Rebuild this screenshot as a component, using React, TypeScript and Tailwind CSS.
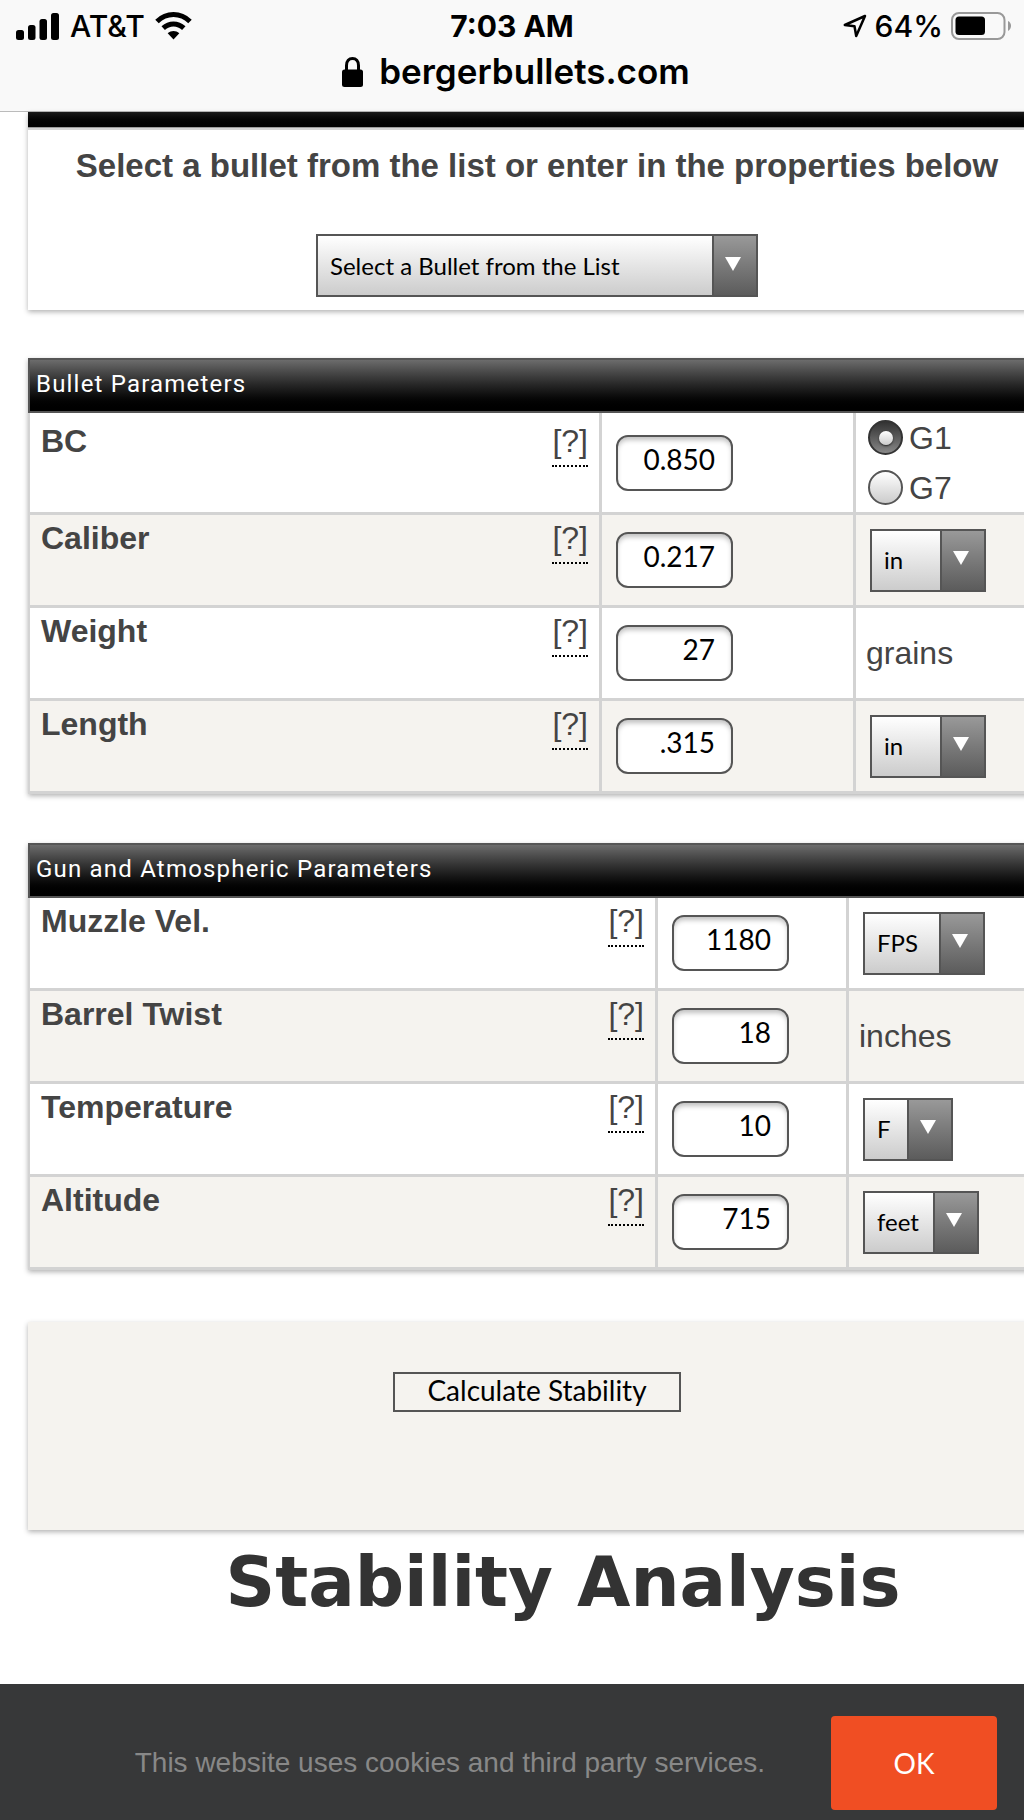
import React, { useState } from 'react';

type Row = {
  id: string;
  label: string;
  value: string;
  unit: React.ReactNode;
};

const SignalIcon = () => (
  <svg width="44" height="27" viewBox="0 0 44 27" fill="#000" aria-hidden="true">
    <rect x="0" y="17" width="8" height="10" rx="2.5" />
    <rect x="12" y="12" width="7.5" height="15" rx="2.5" />
    <rect x="23.5" y="6" width="7.5" height="21" rx="2.5" />
    <rect x="35" y="0" width="8" height="27" rx="2.5" />
  </svg>
);

const WifiIcon = () => (
  <svg width="37" height="28" viewBox="0 0 37 28" fill="none" stroke="#000" aria-hidden="true">
    <path d="M2 9.5C11.5 .2 25.5 .2 35 9.5" strokeWidth="5" />
    <path d="M8.2 16.2c6-5.6 14.6-5.6 20.6 0" strokeWidth="5" />
    <path d="M12.7 21.3c3.5-3.2 8.100-3.2 11.600 0L18.5 27.5z" fill="#000" stroke="none" />
  </svg>
);

const LockIcon = () => (
  <svg width="21" height="30" viewBox="0 0 21 30" aria-hidden="true">
    <path d="M4.5 14V8.5C4.5 4 7 1.5 10.5 1.5S16.5 4 16.5 8.5V14" fill="none" stroke="#000" strokeWidth="3" />
    <rect x="0" y="12.5" width="21" height="17.5" rx="2.5" />
  </svg>
);

const LocationIcon = () => (
  <svg width="24" height="24" viewBox="0 0 24 24" fill="none" stroke="#000" strokeWidth="2.5" strokeLinejoin="round" aria-hidden="true">
    <path d="M22 2L1.8 11L11.5 12.3L13.2 22z" />
  </svg>
);

const BatteryIcon = () => (
  <svg width="61" height="28" viewBox="0 0 61 28" aria-hidden="true">
    <rect x="1" y="1" width="52.5" height="26" rx="7" fill="none" stroke="#999" strokeWidth="2" />
    <rect x="4.5" y="4.5" width="29.5" height="18.5" rx="3.5" fill="#000" />
    <path d="M57 9c4 1.5 4 8 0 10z" fill="#999" />
  </svg>
);

const StatusBar = () => (
  <header className="border-b border-[#bbb] bg-[#f9f9f9] font-['Inter',sans-serif] text-black">
    <div className="grid grid-cols-[1fr_auto_1fr] items-center px-4 pt-2">
      <div className="flex items-center gap-2.5">
        <SignalIcon />
        <span className="text-[30px] leading-9 font-medium">AT&amp;T</span>
        <WifiIcon />
      </div>
      <span className="text-[30px] leading-9 font-bold">7:03 AM</span>
      <div className="-mr-1 flex items-center justify-end gap-2">
        <LocationIcon />
        <span className="text-[30px] leading-9 font-medium">64%</span>
        <BatteryIcon />
      </div>
    </div>
    <div className="flex items-center justify-center gap-4 pt-1 pb-4 pl-2">
      <LockIcon />
      <span className="text-[35px] leading-[47px] font-semibold">bergerbullets.com</span>
    </div>
  </header>
);

type DropDownProps = {
  id: string;
  label: string;
  options: string[];
  className: string;
};

const DropDown = ({ id, label, options, className }: DropDownProps) => (
  <div className={`relative ${className}`}>
    <select
      id={id}
      aria-label={label}
      className="h-[63px] w-full appearance-none border-2 border-[#555] bg-linear-to-b from-white to-[#ccc] pr-12 pl-3 font-['Lato',sans-serif] text-2xl text-black"
    >
      {options.map((option) => (
        <option key={option}>{option}</option>
      ))}
    </select>
    <span className="pointer-events-none absolute inset-y-0 right-0 flex w-[46px] items-center justify-center border-2 border-[#555] bg-linear-to-b from-[#999] to-[#5c5c5c] pr-1 pb-1">
      <svg width="16" height="14" viewBox="0 0 16 14" fill="#fff" aria-hidden="true">
        <path d="M0 0h16L8 14z" />
      </svg>
    </span>
  </div>
);

const DragRadios = () => {
  const [model, setModel] = useState('G1');

  return (
    <div className="flex flex-col gap-[15px] pl-3">
      {['G1', 'G7'].map((name) => (
        <label key={name} className="flex h-[35px] items-center gap-1.5">
          <input
            type="radio"
            name="drag-model"
            value={name}
            checked={model === name}
            onChange={() => setModel(name)}
            className="peer sr-only"
          />
          <span className="flex size-[35px] items-center justify-center rounded-full border-2 border-[#555] bg-linear-to-b from-white to-[#ccc] peer-checked:border-[#333] peer-checked:from-[#333] peer-checked:to-[#888]">
            {model === name && (
              <span className="size-3.5 rounded-full bg-linear-to-b from-white to-[#ccc] shadow-[0_1px_2px_#222]" />
            )}
          </span>
          {name}
        </label>
      ))}
    </div>
  );
};

const bulletRows: Row[] = [
  { id: 'bc', label: 'BC', value: '0.850', unit: <DragRadios /> },
  {
    id: 'caliber',
    label: 'Caliber',
    value: '0.217',
    unit: <DropDown id="caliber-unit" label="Caliber unit" options={['in', 'mm']} className="ml-3.5 w-[116px]" />,
  },
  { id: 'weight', label: 'Weight', value: '27', unit: 'grains' },
  {
    id: 'length',
    label: 'Length',
    value: '.315',
    unit: <DropDown id="length-unit" label="Length unit" options={['in', 'mm']} className="ml-3.5 w-[116px]" />,
  },
];

const gunRows: Row[] = [
  {
    id: 'velocity',
    label: 'Muzzle Vel.',
    value: '1180',
    unit: <DropDown id="velocity-unit" label="Velocity unit" options={['FPS', 'MPS']} className="ml-3.5 w-[122px]" />,
  },
  { id: 'twist', label: 'Barrel Twist', value: '18', unit: 'inches' },
  {
    id: 'temperature',
    label: 'Temperature',
    value: '10',
    unit: <DropDown id="temperature-unit" label="Temperature unit" options={['F', 'C']} className="ml-3.5 w-[90px]" />,
  },
  {
    id: 'altitude',
    label: 'Altitude',
    value: '715',
    unit: <DropDown id="altitude-unit" label="Altitude unit" options={['feet', 'm']} className="ml-3.5 w-[116px]" />,
  },
];

type ParameterTableProps = {
  title: string;
  rows: Row[];
  valueCol: string;
  unitCol: string;
};

const ParameterTable = ({ title, rows, valueCol, unitCol }: ParameterTableProps) => (
  <table className="w-full table-fixed border-separate border-spacing-0 bg-white text-[32px] leading-9 text-[#444] shadow-[0_2px_5px_rgba(0,0,0,0.3)]">
    <colgroup>
      <col />
      <col className={valueCol} />
      <col className={unitCol} />
    </colgroup>
    <thead>
      <tr>
        <th
          colSpan={3}
          className="h-[55px] border-2 border-[#555] bg-linear-to-b from-[#6c6c6c] to-black px-1.5 pb-1 text-left font-['Roboto',sans-serif] text-2xl font-normal tracking-wider text-white"
        >
          {title}
        </th>
      </tr>
    </thead>
    <tbody>
      {rows.map((row) => (
        <tr key={row.id} className="even:bg-[#f5f3ef]">
          <td className={`border-r-3 border-b-3 border-l-2 border-[#d3d3d3] py-[5px] pr-[11px] pl-[11px] ${row.id === 'bc' ? 'h-[102px]' : 'h-[93px]'}`}>
            <div className="flex h-20 items-start justify-between">
              <label htmlFor={row.id} className="font-bold">{row.label}</label>
              <a href={`#${row.id}`} className="border-b-2 border-dotted border-black pb-1.5 leading-9">[?]</a>
            </div>
          </td>
          <td className="border-r-3 border-b-3 border-[#d3d3d3] pl-3.5">
            <input
              id={row.id}
              type="text"
              defaultValue={row.value}
              className="block h-14 w-[117px] rounded-xl border-2 border-[#555] bg-white pr-4 pb-2 text-right font-['Lato',sans-serif] text-[28px] text-black shadow-[inset_0_4px_5px_-1px_rgba(0,0,0,0.25)]"
            />
          </td>
          <td className="border-b-3 border-[#d3d3d3]">
            {typeof row.unit === 'string' ? <span className="pl-2.5">{row.unit}</span> : row.unit}
          </td>
        </tr>
      ))}
    </tbody>
  </table>
);

const App = () => {
  return (
    <div className="flex min-h-screen flex-col overflow-x-hidden bg-white font-['Liberation_Sans',sans-serif]">
      <StatusBar />

      {/* The page is wider than the phone, so the panels run off the right edge */}
      <main className="-mr-[22px] ml-7 flex flex-col">
        <section className="mb-12 bg-white shadow-[0_2px_5px_rgba(0,0,0,0.3)]">
          <div className="h-4 border-b border-[#999] bg-linear-to-b from-[#1a1a1a] to-black" />
          <div className="flex flex-col items-center border-t-2 border-[#d3d3d3] pt-[18px] pb-[13px]">
            <h2 className="mb-[50px] text-[33px] leading-9 font-bold whitespace-nowrap text-[#444]">
              Select a bullet from the list or enter in the properties below
            </h2>
            <DropDown id="bullet" label="Bullet" options={['Select a Bullet from the List']} className="w-[442px]" />
          </div>
        </section>

        <div className="mb-[49px]">
          <ParameterTable title="Bullet Parameters" rows={bulletRows} valueCol="w-[254px]" unitCol="w-[190px]" />
        </div>

        <ParameterTable title="Gun and Atmospheric Parameters" rows={gunRows} valueCol="w-[191px]" unitCol="w-[197px]" />

        <section className="mt-[52px] flex justify-center bg-[#f5f3ef] pt-[50px] pb-[118px] shadow-[0_2px_5px_rgba(0,0,0,0.3)]">
          <button
            type="button"
            className="h-10 border-2 border-[#555] px-8 pb-1 font-['Lato',sans-serif] text-[28px] leading-8 text-black"
          >
            Calculate Stability
          </button>
        </section>

        <h1 className="mt-3 mb-[61px] pl-[52px] text-center font-['DejaVu_Sans',sans-serif] text-[69px] leading-[80px] font-bold whitespace-nowrap text-[#333]">
          Stability Analysis
        </h1>
      </main>

      <footer className="mt-auto flex items-center justify-end bg-[#373839] pt-8 pr-[27px] pb-2.5">
        <p className="mr-[66px] text-[28px] leading-9 text-[#888]">
          This website uses cookies and third party services.
        </p>
        <button
          type="button"
          className="h-[94px] w-[166px] rounded bg-[#f04e23] font-['Lato',sans-serif] text-[28px] text-white"
        >
          OK
        </button>
      </footer>
    </div>
  );
};

export default App;
